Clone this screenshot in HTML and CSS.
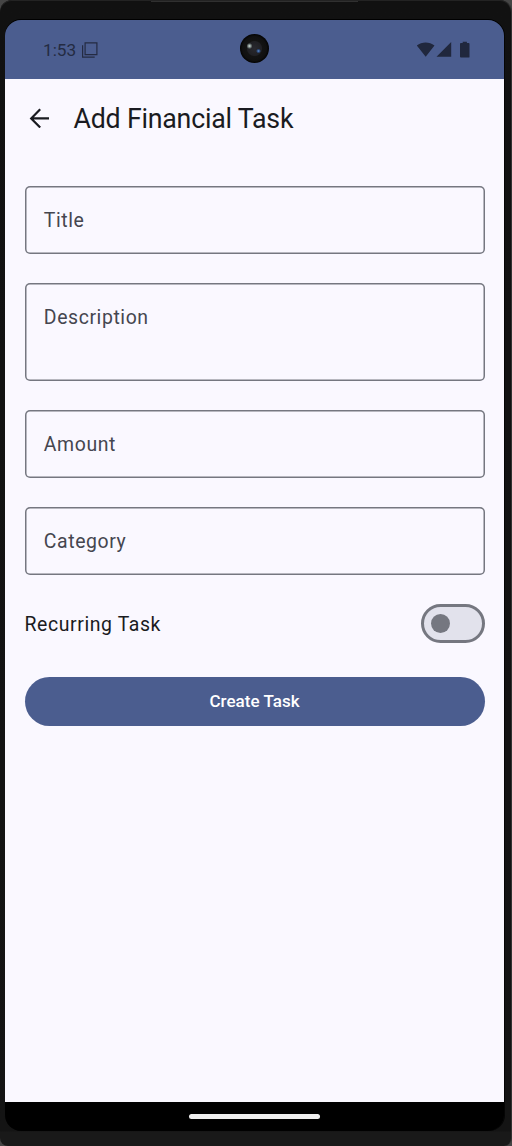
FILE: index.html
```html
<!DOCTYPE html>
<html lang="en">
<head>
<meta charset="utf-8">
<title>Add Financial Task</title>
<link rel="stylesheet" href="styles.css">
</head>
<body>
<div class="device">
  <div class="screen">
    <header class="status">
      <span class="clock">1:53</span>
      <svg class="stack-icon" width="16" height="16" viewBox="0 0 16 16" fill="none" stroke="#242b42" stroke-width="1.2"><path d="M3.100 .9H14.900V12.700H3.100ZM.6 3.200V15.200H12.700"/></svg>
      <span class="camera"></span>
      <svg class="signals" width="54" height="18" viewBox="0 0 54 18" fill="#20273d"><path d="M.8 4.500C5.900.4 13.400 .4 18.500 4.500L9.700 15.700ZM20.500 15.700 35.200 1V15.700Z"/><path d="M44.900 2.100H46.700V.7H50.900V2.100H52.700Q53.500 2.100 53.500 3V15.900Q53.500 16.500 52.700 16.500H44.900Q44 16.500 44 15.600V3Q44 2.100 44.900 2.100Z"/></svg>
    </header>
    <main class="content">
      <div class="appbar">
        <svg class="back" width="20" height="20" viewBox="0 0 20 20" fill="none" stroke="#1a1b21" stroke-width="2.200"><path d="M20 10.400H2.500M11.200 1.300 2.200 10.400 11.200 19.500"/></svg>
        <h1 class="title">Add Financial Task</h1>
      </div>
      <form class="form">
        <div class="field">Title</div>
        <div class="field field-tall">Description</div>
        <div class="field">Amount</div>
        <div class="field">Category</div>
        <div class="recurring">
          <span class="label">Recurring Task</span>
          <span class="switch"><span class="thumb"></span></span>
        </div>
        <button class="create" type="button">Create Task</button>
      </form>
    </main>
    <footer class="nav"><span class="handle"></span></footer>
  </div>
  <span class="edge"></span>
</div>
</body>
</html>
```
FILE: styles.css
```css
* { box-sizing: border-box; }
body { margin: 0; background: #454545; font-family: Roboto, sans-serif; }
.device {
  position: relative;
  width: 512px;
  height: 1146px;
  padding: 20px 7px 15px 5px;
  background: linear-gradient(#111 0, #141414 1131px, #191919 1132px);
  border-radius: 12px 12px 8px 8px;
  border-right: 1px solid #333;
  box-shadow: inset 0 1px #232323;
  overflow: hidden;
}
.edge { position: absolute; top: 1px; left: 151px; width: 207px; height: 1px; background: #303030; }
.screen {
  display: flex;
  flex-direction: column;
  width: 499px;
  height: 1111px;
  border-radius: 16px;
  background: linear-gradient(#4b5d8f 59px, #faf8ff 59px 1082px, #000 1082px);
  overflow: hidden;
  box-shadow: 0 -1px #000, 1px 0 #050505;
}
.status {
  position: relative;
  display: flex;
  align-items: center;
  flex: none;
  height: 59px;
  padding: 0 34px 0 38px;
}
.clock { width: 39px; font-size: 17.200px; line-height: 20px; color: #242b42; white-space: nowrap; }
.stack-icon { margin-top: 1px; }
.signals { margin-left: auto; }
.camera {
  position: absolute;
  left: 235px;
  top: 14px;
  width: 29px;
  height: 29px;
  border-radius: 50%;
  background:
    radial-gradient(circle at 9.500px 12px, #d6e3de 0, #7b8785 1.500px, transparent 3px),
    radial-gradient(circle at 18.500px 17px, #5f8fd0 0, #29436f 1.500px, transparent 2.500px),
    radial-gradient(circle at 14.500px 14.500px, #29292f 0, #202024 7px, #131313 8px, #101010 12px, #050505 14px);
}
.content { flex: 1; padding: 0 19.500px; }
.appbar { display: flex; align-items: center; height: 78px; padding-left: 4.500px; }
.title { margin: 0 0 0 24.500px; padding-top: 1px; font-size: 26.750px; line-height: 34px; font-weight: 400; letter-spacing: -.22px; color: #1a1b21; }
.form { display: flex; flex-direction: column; gap: 29px; margin-top: 29px; }
.field {
  height: 68.200px;
  padding: 1px 19.300px 0;
  border-radius: 5px;
  box-shadow: inset 0 0 0 1.500px #757780;
  font-size: 19.450px;
  line-height: 68px;
  letter-spacing: .59px;
  color: #45464f;
}
.field-tall { height: 97.500px; }
.recurring {
  display: flex;
  align-items: center;
  justify-content: space-between;
  height: 39px;
  font-size: 19.450px;
  letter-spacing: .6px;
  color: #1a1b21;
}
.label { padding-top: 2px; }
.switch {
  display: flex;
  align-items: center;
  width: 64px;
  height: 39px;
  padding-left: 7px;
  border: 3px solid #757780;
  border-radius: 20px;
  background: #e2e2ec;
}
.thumb { width: 19.500px; height: 19.500px; border-radius: 50%; background: #757780; }
.create {
  height: 49px;
  margin-top: 5px;
  padding: 0 0 1px;
  border: 0;
  border-radius: 25px;
  background: #4b5d8f;
  color: #fff;
  font: 500 17px/24px Roboto, sans-serif;
  letter-spacing: .03px;
}
.nav { display: flex; justify-content: center; flex: none; height: 29px; padding-top: 12px; }
.handle { width: 131px; height: 5px; border-radius: 2.500px; background: #efefef; }
```
